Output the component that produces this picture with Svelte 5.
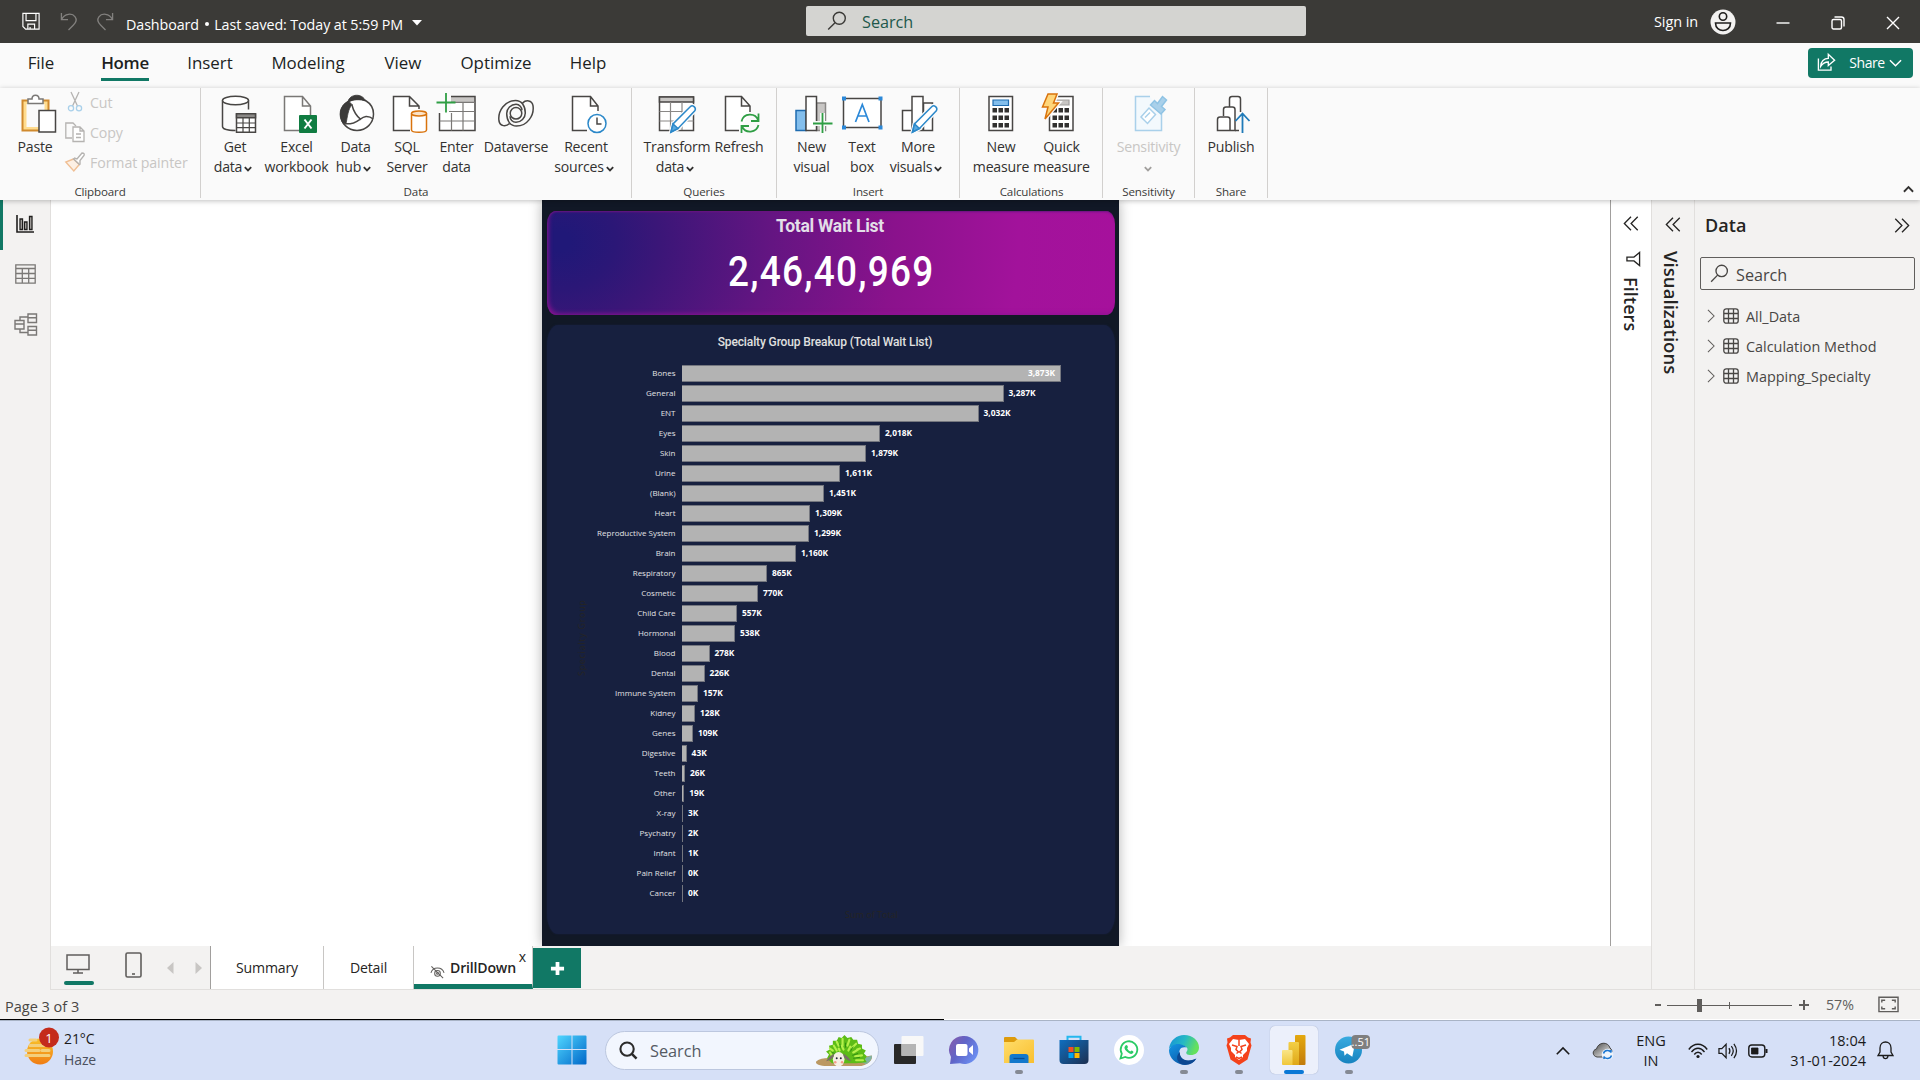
<script>
  const tabs = [
    { t: 'File', w: 84 }, { t: 'Home', w: 84 }, { t: 'Insert', w: 84 }, { t: 'Modeling', w: 112 },
    { t: 'View', w: 78 }, { t: 'Optimize', w: 108 }, { t: 'Help', w: 76 }
  ];
  const groups = [
    { name: 'Data', cls: 'g-data', items: [
      { i: 'get', a: 'Get', b: 'data', v: 1, w: 60 }, { i: 'excel', a: 'Excel', b: 'workbook', w: 63 },
      { i: 'hub', a: 'Data', b: 'hub', v: 1, w: 55 }, { i: 'sql', a: 'SQL', b: 'Server', w: 48 },
      { i: 'enter', a: 'Enter', b: 'data', w: 51 }, { i: 'verse', a: 'Dataverse', b: '', w: 68 },
      { i: 'recent', a: 'Recent', b: 'sources', v: 1, w: 72 } ] },
    { name: 'Queries', cls: 'g-queries', items: [
      { i: 'transform', a: 'Transform', b: 'data', v: 1, w: 74 }, { i: 'refresh', a: 'Refresh', b: '', w: 50 } ] },
    { name: 'Insert', cls: 'g-insert', items: [
      { i: 'visual', a: 'New', b: 'visual', w: 55 }, { i: 'text', a: 'Text', b: 'box', w: 46 },
      { i: 'more', a: 'More', b: 'visuals', v: 1, w: 66 } ] },
    { name: 'Calculations', cls: 'g-calc', items: [
      { i: 'measure', a: 'New', b: 'measure', w: 58 }, { i: 'quick', a: 'Quick', b: 'measure', w: 63 } ] },
    { name: 'Sensitivity', cls: 'g-sens', items: [{ i: 'sens', a: 'Sensitivity', b: '', v: 1, w: 91, off: true }] },
    { name: 'Share', cls: 'g-share', items: [{ i: 'publish', a: 'Publish', b: '', w: 72 }] }
  ];
  const rows = [
    ['Bones', 3873, 379], ['General', 3287, 321.5], ['ENT', 3032, 296.5], ['Eyes', 2018, 198], ['Skin', 1879, 184],
    ['Urine', 1611, 158], ['(Blank)', 1451, 142], ['Heart', 1309, 128], ['Reproductive System', 1299, 127],
    ['Brain', 1160, 114], ['Respiratory', 865, 85], ['Cosmetic', 770, 76], ['Child Care', 557, 55], ['Hormonal', 538, 53],
    ['Blood', 278, 27.5], ['Dental', 226, 22.5], ['Immune System', 157, 16], ['Kidney', 128, 13], ['Genes', 109, 11],
    ['Digestive', 43, 4.6], ['Teeth', 26, 3], ['Other', 19, 2.2], ['X-ray', 3, 1], ['Psychatry', 2, 1], ['Infant', 1, 1],
    ['Pain Relief', 0, 1], ['Cancer', 0, 1]
  ];
  const fmt = (n) => n.toLocaleString('en-US') + 'K';
  const tables = ['All_Data', 'Calculation Method', 'Mapping_Specialty'];
  const keys = [0, 1, 2];
</script>

{#snippet lens(cls)}
  <svg class={cls} viewBox="0 0 20 20" fill="none" stroke="currentColor" stroke-width="1.4"><circle cx="12.3" cy="7.3" r="6" /><path d="M8 11.7 1.2 18.6" /></svg>
{/snippet}

{#snippet chev()}
  <svg class="chev" viewBox="0 0 8 6" fill="none" stroke="currentColor" stroke-width="1.8"><path d="M.8 1.2 4 4.4 7.2 1.2" /></svg>
{/snippet}

{#snippet dbl(right)}
  <svg class="dbl" class:flip={right} viewBox="0 0 16 16" fill="none" stroke="#252423" stroke-width="1.4"><path d="M8 .8.9 8 8 15.2M15.2.8 8.1 8l7.1 7.2" /></svg>
{/snippet}

{#snippet icon(n)}
  <svg class="ico" viewBox="0 0 40 40" fill="none" stroke="#484644" stroke-width="1.5">
    {#if n === 'get'}
      <path d="M7.5 6.5v26c0 2.300 5 4 13 4M33.500 6.500v9" /><ellipse cx="20.500" cy="6.500" rx="13" ry="4.200" fill="#fff" />
      <path d="M21.500 20h19v18.300h-19z" fill="#fff" /><path d="M21.500 19.800h19v4h-19z" fill="#8a8886" /><path d="M21.500 29h19M21.500 33.700h19M28 24v14M34.300 24v14" stroke-width="1.200" />
    {:else if n === 'excel'}
      <path d="M22 36.500H7.500V2.500h18L33.500 12v9M25.500 2.500V12h8" stroke="#7a7876" fill="#fff" /><rect x="22" y="21" width="18" height="18" rx="1" fill="#107c41" stroke="none" />
      <path d="M27.500 25.500 34.500 34.500M34.500 25.500l-7 9" stroke="#fff" stroke-width="2" />
    {:else if n === 'hub'}
      <path d="M12.500 7.500C8 10 4.700 15 4.700 20c0 9 7 16.500 16.300 16.500S37.500 29 37.500 20c0-5.500-3-10.500-8-13.500-5-2-12-1.500-17 1z" fill="#fff" />
      <path d="M12 7.500C14 -.5 26.500-1 29.500 7c-5.500-2-12-1.500-17.500.5zM12.500 7 16 10.500C12 15 11.500 23 10 29.500L7.500 30C1.500 22 3.500 11.500 12.500 7z" fill="#3b3a39" stroke="#3b3a39" stroke-width=".8" />
      <path d="M15.800 10.500c1.500 6 4.500 11.500 9.200 15.200M7.500 29.500c4 .8 7 .3 10-.5 5.500-2 8-6 12.500-6.500 4-.2 6 1.500 7.200 2.500" />
    {:else if n === 'sql'}
      <path d="M23 36.500H6.500V2.500h16L32 12v3M22.500 2.500V12H32" fill="#fff" /><path d="M24.500 19.500V36c0 3 15 3 15 0V19.500" fill="#fff" stroke="#d9730d" /><ellipse cx="32" cy="19.500" rx="7.500" ry="2.500" fill="#fbe3c8" stroke="#d9730d" />
    {:else if n === 'enter'}
      <path d="M2.500 18v18.500H38V3H14v14.500z" fill="#fff" stroke="none" /><path d="M14 3h24v5H14z" fill="#c8c6c4" stroke="none" /><path d="M14 2.500h24v34H2.500V19" /><path d="M14 8.300h24M12 17.500h26M2.500 27H38M14.500 19v17.500M26 8.500v28" stroke-width="1.200" stroke="#7a7876" />
      <path d="M9 -1v19.500M-.5 8.500h19" stroke="#2f9e44" stroke-width="1.800" />
    {:else if n === 'verse'}
      <path d="M13.500 29.500C10 33 4 32.500 3 27 1.500 17 9 6.500 19.500 6.500c6 0 9.800 5 9.800 12.500 0 5-4.300 9.300-9.300 9.300-3.500 0-6-3-6-6" />
      <path d="M26.500 9.100C30 5.600 36 6.100 37 11.600 38.500 21.600 31 32.100 20.500 32.100c-6 0-9.800-5-9.800-12.500 0-5 4.300-9.300 9.300-9.300 3.500 0 6 3 6 6" /><circle cx="20" cy="19.300" r="5.800" />
    {:else if n === 'recent'}
      <path d="M21 36.500H6.500V2.500h18L32 12v5M24.500 2.500V12H32" fill="#fff" /><circle cx="31" cy="29.500" r="9" fill="#fff" stroke="#2b88c9" /><path d="M31 23.500v6.500h4.500" />
    {:else if n === 'transform'}
      <path d="M2.500 3h34v33.500h-34z" fill="#fff" /><path d="M2.500 3h34v5h-34z" fill="#c8c6c4" /><path d="M2.500 17.500h34M2.500 27h34M13.500 8v28M25 8v28" stroke-width="1.200" stroke="#8a8886" />
      <path d="m14 38 2-8L33.500 12.500c2-2 6 1 4.500 4L21 34.500z" fill="#fff" stroke="#fafafa" stroke-width="4" /><path d="m14 38 2-8L33.500 12.500c2-2 6 1 4.500 4L21 34.500z" fill="#fff" stroke="#2b88c9" /><path d="m14 38 2-8 5 4.500z" fill="#5aa9e0" stroke="#2b88c9" />
    {:else if n === 'refresh'}
      <path d="M20 36.500H6.500V2.500h16L31 12v6M22.500 2.500V12H31" fill="#fff" /><path d="M22.500 27.500c2-9 14-9 16.500-1.500M39.500 19.500v7.500H32M39.500 31c-2 8-13 9-16.500 1.500M22.500 39v-7H30" stroke="#2f9e44" stroke-width="1.800" />
    {:else if n === 'visual'}
      <path d="M24.500 9h9v27.500h-9z" fill="#c8c6c4" stroke="#8a8886" /><path d="M4 16.500h10v20H4z" fill="#83beec" stroke="#1f6cb0" /><path d="M14 2.500h10.500v34H14z" fill="#fff" />
      <path d="M30.500 19v20M21 29.500h19.500" stroke="#fafafa" stroke-width="5" /><path d="M30.500 19v20M21 29.500h19.500" stroke="#2f9e44" stroke-width="1.800" />
    {:else if n === 'text'}
      <path d="M1.500 4.500h37.500v29H1.500z" fill="#fff" /><path d="M13.500 28 20.300 10.500 27 28M16 22h8.700" stroke="#2b88d8" stroke-width="1.700" /><path d="M0 2.500h4v4H0zM36.500 2.500h4v4h-4zM0 31.500h4v4H0zM36.500 31.500h4v4h-4z" fill="#2b88d8" stroke="none" />
    {:else if n === 'more'}
      <path d="M25.500 9h9v27.500h-9zM4.500 16.500H14v20H4.500zM14 2.500h11v34H14z" fill="#fff" />
      <path d="m14.500 38 2-8L34 12.500c2-2 6 1 4.500 4L21.500 34.500z" fill="#fff" stroke="#fafafa" stroke-width="4" /><path d="m14.500 38 2-8L34 12.500c2-2 6 1 4.500 4L21.500 34.500z" fill="#fff" stroke="#2b88c9" /><path d="m14.500 38 2-8 5 4.500z" fill="#5aa9e0" stroke="#2b88c9" />
    {:else if n === 'measure'}
      <path d="M8 2.500h23.500v34H8z" fill="#fff" /><path d="M12 6h15.500v5.500H12z" fill="#83beec" stroke="#1f6cb0" stroke-width="1.200" />
      {#each keys as r}{#each keys as c}<rect x={11.500 + c * 6} y={14 + r * 7.500} width="4.500" height="4.500" fill="#323130" stroke="none" />{/each}{/each}
    {:else if n === 'quick'}
      <g transform="translate(-2 0)"><path d="M9.500 2.500h23.500v34H9.500z" fill="#fff" /><path d="M16 6h13v5H16z" fill="#c8c6c4" stroke="#a19f9d" stroke-width="1.200" />
      {#each keys as r}{#each keys as c}<rect x={12.500 + c * 6} y={14 + r * 7.500} width="4.500" height="4.500" fill="#323130" stroke="none" />{/each}{/each}
      <path d="M8 0h9l-3.500 9h5L5 25l3-12H2.500z" fill="#ffd67a" stroke="#fafafa" stroke-width="4" /><path d="M8 0h9l-3.500 9h5L5 25l3-12H2.500z" fill="#ffd67a" stroke="#d9730d" /></g>
    {:else if n === 'sens'}
      <path d="M21 2.500H6.500v34h26V20" stroke="#a9d0ea" fill="#f3f9fd" /><path d="m12 23 8-9 6.500 6.500-8 9zM16 23.500l5-5" stroke="#a9d0ea" fill="#fff" /><path d="m21.500 11 4-4.500 3 3 5-7 4 3.500-5 6.500 3.500 3-4 4.500z" fill="#a9d0ea" stroke="#8fc3e4" />
    {:else if n === 'publish'}
      <path d="M6.500 36.500v-11q0-2.500 2.500-2.500h7.500q2.500 0 2.500 2.500v11zM12.500 22v-6.500q0-2.500 2.500-2.500h6.500q2.500 0 2.500 2.500v21H19M18.500 13V5q0-2.500 2.500-2.500h6q2.500 0 2.500 2.500v13" fill="#fff" /><path d="M24 36.500h4" /><path d="M31.500 39V20M24.500 27l7-7.500 7 7.500" stroke="#1f7ab8" stroke-width="1.800" />
    {/if}
  </svg>
{/snippet}

<div class="app">
  <header class="title">
    <div class="quick">
      <svg class="q1" viewBox="0 0 20 20" fill="none" stroke="#fff" stroke-width="1.300"><path d="M1 1h18v17.500H4L1 15.500zM4.500 1v8h11V1M6.500 18.500v-5.500h7.500v5.500M9 16v2" /></svg>
      <svg class="q2" viewBox="0 0 18 20" fill="none" stroke="#82807e" stroke-width="1.400"><path d="M1.500 1v7h7M1.500 8C5 1 13 1 16 5s0 7-2 9l-5 5" /></svg>
      <svg class="q3" viewBox="0 0 18 20" fill="none" stroke="#82807e" stroke-width="1.400"><path d="M16.500 1v7h-7M16.500 8C13 1 5 1 2 5s0 7 2 9l5 5" /></svg>
      <span class="doc">Dashboard <i></i> Last saved: Today at 5:59 PM</span>
      <svg class="caret" viewBox="0 0 10 6"><path d="M0 0h10L5 5.500z" fill="#fff" /></svg>
    </div>
    <div class="find">{@render lens('lens1')}<span>Search</span></div>
    <div class="win">
      <span class="sign">Sign in</span>
      <svg class="user" viewBox="0 0 26 26"><circle cx="13" cy="13" r="12.500" fill="#f3f2f1" /><g fill="none" stroke="#201f1e" stroke-width="1.600"><circle cx="13" cy="7.500" r="3.700" /><path d="M5.500 14h15c0 10-15 10-15 0z" /></g></svg>
      <svg class="wc" viewBox="0 0 14 14" stroke="#fff" stroke-width="1.400"><path d="M.5 7h13" /></svg>
      <svg class="wc" viewBox="0 0 14 14" fill="none" stroke="#fff" stroke-width="1.400"><rect x="1" y="3.500" width="9.500" height="9.500" rx="1.500" /><path d="M3.500 1h7q2.500 0 2.500 2.500v7" /></svg>
      <svg class="wc" viewBox="0 0 14 14" stroke="#fff" stroke-width="1.400"><path d="M1 1l12 12M13 1 1 13" /></svg>
    </div>
  </header>

  <nav class="tabs">
    {#each tabs as t}<div class="tab" class:on={t.t === 'Home'} style:width="{t.w}px"><span>{t.t}</span></div>{/each}
    <button class="share">
      <svg viewBox="0 0 20 20" fill="none" stroke="#fff" stroke-width="1.500"><path d="M1 6v13h14v-4M3.500 15c0-6 4-9 8.500-9V1.500L19 8l-7 6v-4c-4 0-6 1-8.500 5z" /></svg>
      <span>Share</span>
      <svg class="sc" viewBox="0 0 14 8" fill="none" stroke="#fff" stroke-width="1.600"><path d="M1 1l6 6 6-6" /></svg>
    </button>
  </nav>

  <section class="ribbon">
    <div class="group g-clip">
      <div class="clip">
        <div class="paste">
          <svg class="ico" viewBox="0 0 40 40" fill="none" stroke-width="1.500"><path d="M5.500 6.500H31.500V36.500H5.500z" fill="#ffdc8f" stroke="#d08a2e" stroke-width="2" /><path d="M9.500 10h18v23h-18z" fill="#fafafa" stroke="none" /><path d="M11 9.500V5h4c0-5 7-5 7 0h4v4.500z" fill="#fff" stroke="#7a7876" /><path d="M22 16.500h16.500V38H22z" fill="#fff" stroke="#484644" /></svg>
          <span>Paste</span>
        </div>
        <div class="edits">
          <div class="edit"><svg viewBox="0 0 20 20" fill="none" stroke="#b5b3b1" stroke-width="1.300"><path d="M6 0l6.500 14M14 0 7.500 14" /><circle cx="6" cy="16.300" r="2.600" stroke="#a9d0ea" /><circle cx="14" cy="16.300" r="2.600" stroke="#a9d0ea" /></svg>Cut</div>
          <div class="edit"><svg viewBox="0 0 20 20" fill="none" stroke="#b5b3b1" stroke-width="1.300"><path d="M7 16H.8V1H8l3 3" /><path d="M8 5h7l4 4v10.500H8zM15 5v4h4M11 12h5M11 15.500h5" fill="#fff" /></svg>Copy</div>
          <div class="edit"><svg viewBox="0 0 20 20" fill="none" stroke="#b5b3b1" stroke-width="1.400"><path d="m9 6 3 1 5-6q3 0 2 2.500l-4 5v4" fill="#fff" /><path d="M8.500 7 .8 10l8 9 5.500-6.500z" fill="#fdf0e4" stroke="#f0bf94" /><path d="m8 6.500 7 6.500" /></svg>Format painter</div>
        </div>
      </div>
      <div class="gname">Clipboard</div>
    </div>
    {#each groups as g}
      <div class="group {g.cls}">
        <div class="items">
          {#each g.items as it}
            <div class="item" class:off={it.off} style:width="{it.w}px">
              {@render icon(it.i)}
              <span>{it.a}</span>
              <span class="l2" class:has={it.v}>{it.b}{#if it.v}{@render chev()}{/if}</span>
            </div>
          {/each}
        </div>
        <div class="gname">{g.name}</div>
      </div>
    {/each}
    <svg class="fold" viewBox="0 0 12 8" fill="none" stroke="#323130" stroke-width="2"><path d="M1 7l5-5 5 5" /></svg>
  </section>

  <main>
    <aside class="rail">
      <div class="active"></div>
      <svg class="r1" viewBox="0 0 18 18" fill="none" stroke="#201f1e" stroke-width="1.300"><path d="M1 0v17h17" stroke-width="1.600" /><path d="M4 4h2.500v10.500H4zM8.500 7H11v7.500H8.500zM13.500 1.500H16v13h-2.500z" fill="#b3b0ad" /></svg>
      <svg class="r2" viewBox="0 0 21 20" fill="none" stroke="#7a7876" stroke-width="1.300"><path d="M.8.800h19.400v18.400H.8zM.8 4.500h19.400M.8 9.500h19.400M.8 14.400h19.400M7.300 4.500v15M13.700 4.500v15" /></svg>
      <svg class="r3" viewBox="0 0 23 23" fill="none" stroke="#7a7876" stroke-width="1.400"><path d="M1 7.500h9v8.500H1zM1 11h9M14 1h8.500v8.500H14zM14 4.800h8.500M14 13.500h8.500V22H14zM14 17.300h8.500M6 7.500V4h8M6 16v3.500h8" /></svg>
    </aside>

    <div class="center">
      <div class="canvas">
        <div class="board">
          <div class="page">
            <div class="card"><h2>Total Wait List</h2><strong>2,46,40,969</strong></div>
            <div class="chart">
              <h3>Specialty Group Breakup (Total Wait List)</h3>
              <div class="plot">
                <span class="ylab">Specialty Group</span>
                {#each rows as r, n}
                  <div class="row"><span class="cat">{r[0]}</span><div class="bar" class:thin={r[2] < 2} style:width="{r[2]}px">{#if n === 0}<b>{fmt(r[1])}</b>{/if}</div>{#if n > 0}<b>{fmt(r[1])}</b>{/if}</div>
                {/each}
              </div>
              <span class="xlab">Sum of Total</span>
            </div>
          </div>
        </div>
        <aside class="filters">
          {@render dbl(false)}
          <svg class="funnel" viewBox="0 0 16 16" fill="none" stroke="#252423" stroke-width="1.400"><path d="M14.500 1v14L8.500 10H1V6h7.500z" /></svg>
          <span class="vert">Filters</span>
        </aside>
      </div>
      <footer class="pages">
        <div class="views">
          <svg class="mon" viewBox="0 0 24 20" fill="none" stroke="#605e5c" stroke-width="1.500"><path d="M1 1h22v14.500H1zM12 15.500v3.500M7 19h10" /></svg>
          <svg class="tel" viewBox="0 0 17 26" fill="none" stroke="#605e5c" stroke-width="1.600"><rect x="1" y="1" width="15" height="24" rx="1.500" /><path d="M7 22h3" /></svg>
          <svg class="arr a1" viewBox="0 0 7 14"><path d="M6.500 1v12L0 7z" fill="#c8c6c4" /></svg>
          <svg class="arr" viewBox="0 0 7 14"><path d="M.5 1v12L7 7z" fill="#c8c6c4" /></svg>
        </div>
        <div class="pt p1">Summary</div>
        <div class="pt p2">Detail</div>
        <div class="pt p3"><svg viewBox="0 0 16 14" fill="none" stroke="#605e5c" stroke-width="1.100"><path d="M1 8C3 1 13 1 15 8M1.500 1l12.500 12.500" /><circle cx="8" cy="8.500" r="3" /><circle cx="8" cy="8.500" r="1" /></svg>DrillDown<span class="close">x</span></div>
        <button class="add"><svg viewBox="0 0 16 16" stroke="#fff" stroke-width="4"><path d="M8 1v14M1 8h14" /></svg></button>
      </footer>
    </div>

    <aside class="visual">{@render dbl(false)}<span class="vert">Visualizations</span></aside>
    <aside class="data">
      <div class="dh"><span>Data</span>{@render dbl(true)}</div>
      <div class="ds">{@render lens('lens2')}<span>Search</span></div>
      {#each tables as t}
        <div class="dr">
          <svg class="dc" viewBox="0 0 9 16" fill="none" stroke="#605e5c" stroke-width="1.200"><path d="M1 1l7 7-7 7" /></svg>
          <svg class="dt" viewBox="0 0 16 16" fill="none" stroke="#484644" stroke-width="1.300"><rect x=".8" y=".8" width="14.400" height="14.400" rx="2.500" /><path d="M5.500 1v14M10.500 1v14M1 5.500h14M1 10.500h14" /></svg>
          <span>{t}</span>
        </div>
      {/each}
    </aside>
  </main>

  <div class="status">
    <span class="pg">Page 3 of 3</span>
    <div class="zoom">
      <svg class="slider" viewBox="0 0 154 16" stroke="#605e5c"><path d="M0 8h6" stroke-width="2" /><path d="M12 8.500h125" stroke-width="1" /><path d="M74.500 5v7" /><path d="M44.500 2v13" stroke-width="5" /><path d="M144 8h10M149 3v10" stroke-width="2" /></svg>
      <span>57%</span>
      <svg class="fit" viewBox="0 0 22 17" fill="none" stroke="#605e5c" stroke-width="1.500"><path d="M1 1h20v15H1z" /><path d="M4 6.500V4h3.500M14.500 4H18v2.500M18 10.500V13h-3.500M7.500 13H4v-2.500" /></svg>
    </div>
  </div>
  <div class="edge"></div>

  <div class="task">
    <div class="weather">
      <svg viewBox="0 0 32 38"><defs><linearGradient id="sun" x2="0" y2="1"><stop offset="0" stop-color="#f9c22b" /><stop offset="1" stop-color="#f07c13" /></linearGradient></defs><circle cx="15" cy="24.500" r="13" fill="url(#sun)" /><path d="M5 13h6M5 18.500h17M1 23.500h13M17 23.500h7M1 28.500h23" stroke="#f3cf7c" stroke-width="3" stroke-linecap="round" /><circle cx="24" cy="10.500" r="10" fill="#c42b1c" /><text x="24" y="15.500" text-anchor="middle" font-size="13" fill="#fff">1</text></svg>
      <div class="wt"><span>21°C</span><span class="hz">Haze</span></div>
    </div>
    <div class="apps">
      <div class="app-i"><svg viewBox="0 0 30 30"><defs><linearGradient id="win" x2="1" y2="1"><stop offset="0" stop-color="#50d6ff" /><stop offset="1" stop-color="#0067c8" /></linearGradient></defs><path d="M1.500.5h13v13.500h-14V1.500q0-1 1-1zM15.500.5h13q1 0 1 1V14h-14zM.5 15h14v14.500h-13q-1 0-1-1zM15.500 15h14v13.500q0 1-1 1h-13z" fill="url(#win)" /></svg></div>
      <div class="pill">
        <svg class="pl" viewBox="0 0 20 20" fill="none" stroke="#2b2b2b" stroke-width="2.200"><circle cx="8.500" cy="8.500" r="7" /><path d="M13.500 13.500l5 5" stroke-width="2.600" /></svg>
        <span>Search</span>
        <svg class="hog" viewBox="0 0 60 34">
          <path d="M1 27c6-5 18-3 29-2 9 1 18-3 28-4 2 4-4 11-14 11H12C5 32-1 30 1 27z" fill="#bb9863" /><path d="M40 25c6 1 12-2 18-4 1 3-2 7-6 9z" fill="#7fb3a4" />
          <path d="M12 24l2-4-3-3 4-2-1-4 4-1 0-4 4 0 2-4 3 1 3-3 3 3 4-1 2 3 4 0 1 4 4 1 0 4 4 2-2 3 3 3-2 3 2 3-11 1H17z" fill="#5cbc17" />
          <path d="M17 21l-2-3M18 16l-3-2M22 16l-3-5M24 11l-2-4M28 11V4M29 15l-2-4M33 11l2-6M34 16l2-4M38 13l4-4M39 18l5-3M43 15l3-1M41 22l7-1M42 26l7 0M25 16l-1-2" stroke="#b4f04a" stroke-width="2.200" stroke-linecap="round" /><path d="M20 19l-3-1M26 13l-1-4M31 13l0-5M36 17l3-5M38 21l6-2M39 24l7-1" stroke="#2f8f12" stroke-width="1" />
          <ellipse cx="24" cy="25" rx="6" ry="7.500" fill="#f4efe4" /><path d="M19 19q-5 3-8 8 6-1 8-5zM29 19q5 3 8 8-6-1-8-5z" fill="#777064" /><circle cx="22" cy="24" r="1" fill="#23233a" /><circle cx="26.200" cy="24" r="1" fill="#23233a" /><circle cx="20.500" cy="28" r="1.300" fill="#f59c8d" /><circle cx="27.500" cy="28" r="1.300" fill="#f59c8d" />
        </svg>
      </div>
      <div class="app-i"><svg viewBox="0 0 30 30"><rect x="0" y="9" width="22" height="20" rx="1" fill="#292929" /><rect x="7.500" y="1" width="22" height="20" rx="1" fill="#f8f8f8" /><path d="M7.500 9H22v12H7.500z" fill="#b5b5b5" /></svg></div>
      <div class="app-i"><svg viewBox="0 0 30 30"><defs><linearGradient id="chat" x2="1" y2=".6"><stop offset="0" stop-color="#8a5aa8" /><stop offset=".5" stop-color="#6065c8" /><stop offset="1" stop-color="#6b8df0" /></linearGradient></defs><path d="M15 1a14 14 0 1 1-4 27.300L1 29l1-7A14 14 0 0 1 15 1z" fill="url(#chat)" /><rect x="7" y="9" width="11.500" height="12" rx="2" fill="#fff" /><path d="M20 13.500l4-3.500v10l-4-3.500z" fill="#fff" /></svg></div>
      <div class="app-i run"><svg viewBox="0 0 30 30"><defs><linearGradient id="fold" x2="1" y2="1"><stop offset="0" stop-color="#ffdd6b" /><stop offset="1" stop-color="#f9bf2f" /></linearGradient></defs><path d="M0 3q0-1 1-1h10l3 3-2 4H0z" fill="#dd9b0c" /><path d="M0 7h10l3-2.500h16q1 0 1 1V28H0z" fill="url(#fold)" /><path d="M5.500 28v-6q0-3 3-3h13q3 0 3 3v6z" fill="#1378cc" /><path d="M9.500 23.500h11" stroke="#0a4d91" stroke-width="1.300" /></svg></div>
      <div class="app-i"><svg viewBox="0 0 30 30"><defs><linearGradient id="store" x2="1" y2="1"><stop offset="0" stop-color="#0f6fc0" /><stop offset="1" stop-color="#1d2f50" /></linearGradient></defs><path d="M8.500 8V1.800h13V8" fill="none" stroke="#25b7ee" stroke-width="2" /><path d="M.5 5h29v20q0 4-4 4h-21q-4 0-4-4z" fill="url(#store)" /><path d="M9.500 12h5v5h-5z" fill="#f25022" /><path d="M15.500 12h5v5h-5z" fill="#7fba00" /><path d="M9.500 18h5v5h-5z" fill="#00a4ef" /><path d="M15.500 18h5v5h-5z" fill="#ffb900" /></svg></div>
      <div class="app-i"><svg viewBox="0 0 30 30"><circle cx="15" cy="15" r="15" fill="#fff" /><path d="M6.500 23.500l1.300-4.800A8.300 8.300 0 1 1 11.300 22z" fill="none" stroke="#2bcb66" stroke-width="1.800" /><path d="M11.500 10.500q1.500-1.500 2.500 1.500l-.8 1.500q1 2 3 3l1.300-1q3 1 1.500 2.500-2 2-5-.5-4-3-3.500-5.500z" fill="#2bcb66" /></svg></div>
      <div class="app-i run"><svg viewBox="0 0 30 30"><defs><linearGradient id="ed" x2="1" y2=".3"><stop offset="0" stop-color="#168fd8" /><stop offset=".55" stop-color="#26b9c4" /><stop offset="1" stop-color="#65e15c" /></linearGradient><linearGradient id="ed2" x2=".8" y2="1"><stop offset="0" stop-color="#1496e4" /><stop offset="1" stop-color="#0a4f9f" /></linearGradient></defs><path d="M0 14C1 5 8 0 15 0c9 0 15 6 15 12.500 0 5-4 7.500-8 7.500-4 0-6-1.500-4-4 1.500-2 0-5-5-5.500C7 9.500 2 11 0 14z" fill="url(#ed)" /><path d="M0 15C2 10 7 8 12 9.500c4 1 5 2 5.500 3C12 11 9 15 11 20c2 6 9 7.500 16 4-4 6-11 7-16 5C4 27 0 21 0 15z" fill="url(#ed2)" /><path d="M11 17c-1 7 6 11 16.500 6.500C24 29 18 31 12 29 7 26 7 20 11 17z" fill="#0d4892" /></svg></div>
      <div class="app-i run"><svg viewBox="0 0 30 30"><path d="M9 0h12l3 2.500 3 1-.5 4 1 3-4 14L15 30 6.500 24.500l-4-14 1-3-.5-4 3-1z" fill="#f4421b" /><path d="M15 5l6-1 4 5-2 4 0 3-4 4 0 2-4 3-4-3 0-2-4-4V13L5 9l4-5z" fill="#fff" /><path d="M8 10l5 1.500-1 3 2.500 2.500-2 1.500M22 10l-5 1.500 1 3-2.500 2.500 2 1.500M12 22l3 1.500 3-1.500M15 5v6" stroke="#f4421b" stroke-width="1.500" fill="none" /></svg></div>
      <div class="app-i run sel"><svg viewBox="0 0 30 30"><defs><linearGradient id="b1" x2="0" y2="1"><stop offset="0" stop-color="#e4a90e" /><stop offset="1" stop-color="#c27b0b" /></linearGradient><linearGradient id="b2" x2="0" y2="1"><stop offset="0" stop-color="#f3cf46" /><stop offset="1" stop-color="#dfa717" /></linearGradient><linearGradient id="b3" x2="0" y2="1"><stop offset="0" stop-color="#f9e589" /><stop offset="1" stop-color="#f0c73a" /></linearGradient></defs><rect x="16" width="10.500" height="30" rx="1" fill="url(#b1)" /><path d="M9.500 8q0-1 1-1h8.500q1 0 1 1v22H9.500z" fill="url(#b2)" /><path d="M3 16q0-1 1-1h8.500q1 0 1 1v14H4q-1 0-1-1z" fill="url(#b3)" /></svg></div>
      <div class="app-i run"><svg viewBox="0 0 30 30"><defs><linearGradient id="tg" x2="0" y2="1"><stop offset="0" stop-color="#39abe0" /><stop offset="1" stop-color="#1783bf" /></linearGradient></defs><circle cx="14.500" cy="15" r="13.500" fill="url(#tg)" /><path d="M5.500 14.800 21 8.500l-2.700 13.300-5.300-3.500-2.500 2.500-.5-4.300z" fill="#fff" /><rect x="17.500" width="18.500" height="14" rx="4" fill="#7f7f7f" /><text x="26.800" y="11" text-anchor="middle" font-size="11" fill="#fff">..51</text></svg></div>
    </div>
    <div class="tray">
      <svg class="t1" viewBox="0 0 14 8" fill="none" stroke="#1b1b1b" stroke-width="1.600"><path d="M.8 7.200 7 1l6.200 6.200" /></svg>
      <svg class="t2" viewBox="0 0 20 18"><defs><linearGradient id="cl" x2="1" y2="1"><stop offset="0" stop-color="#444" /><stop offset=".6" stop-color="#b9b9b9" /></linearGradient></defs><path d="M4 15c-5-1-5-7-.5-8C5 0 15-1 17 6c3 2 3 9-1 9z" fill="url(#cl)" stroke="#444" /><circle cx="14.500" cy="12.500" r="5.800" fill="#eef4fc" /><path d="M10.500 11.500c1-3.500 6-4 7.500-1V8M18.500 13.500c-1 3.500-6 4-7.500 1V17" fill="none" stroke="#1976d2" stroke-width="1.500" /></svg>
      <div class="lang"><span>ENG</span><span>IN</span></div>
      <svg class="t3" viewBox="0 0 20 16" fill="none" stroke="#1b1b1b" stroke-width="1.400"><path d="M.8 6.500c5-7 13.400-7 18.400 0M3.500 9c4-5 9-5 13 0M6.300 11.500c2-3 5.400-3 7.400 0" /><circle cx="10" cy="13.500" r="1.600" fill="#1b1b1b" stroke="none" /></svg>
      <svg class="t4" viewBox="0 0 21 18" fill="none" stroke="#1b1b1b" stroke-width="1.300"><path d="M1 6.500h3L8.500 2v14L4 11.500H1zM11.500 6q2 3 0 6M14 4q4 5 0 10M16.700 1.500q5.500 7.500 0 15" /></svg>
      <svg class="t5" viewBox="0 0 20 14" fill="none" stroke="#1b1b1b" stroke-width="1.400"><rect x=".8" y="1" width="16" height="12" rx="3" /><path d="M3.500 4h6.500v6H3.500z" fill="#1b1b1b" stroke-width=".8" /><path d="M18.500 5v4" stroke-width="2" /></svg>
      <div class="clock"><span>18:04</span><span>31-01-2024</span></div>
      <svg class="t6" viewBox="0 0 17 19" fill="none" stroke="#1b1b1b" stroke-width="1.300"><path d="M1 14.500l2-3.500V7c0-8 11-8 11 0v4l2 3.500zM6 15c.5 3.500 4.500 3.500 5 0" /></svg>
    </div>
  </div>
</div>

<style>
  :global(body) { margin: 0; overflow: hidden; }
  .app, .app * { box-sizing: border-box; }
  .app { width: 1920px; height: 1080px; display: flex; flex-direction: column; overflow: hidden; font-family: "Open Sans", "Noto Sans", sans-serif; font-size: 14px; color: #252423; background: #f3f2f1; }
  svg { flex: none; display: block; overflow: visible; }
  span { white-space: nowrap; }
  button { border: 0; padding: 0; font: inherit; }

  .title { height: 43px; flex: none; background: #3b3a37; color: #fff; display: flex; align-items: center; }
  .quick { width: 806px; display: flex; align-items: center; padding-left: 22px; }
  .q1 { width: 18px; height: 19px; margin-right: 20px; }
  .q2 { width: 17px; height: 19px; margin-right: 20px; }
  .q3 { width: 17px; height: 19px; margin-right: 12px; }
  .doc { font-size: 14.300px; padding-top: 5px; letter-spacing: -.09px; width: 286px; }
  .doc i { display: inline-block; width: 4px; height: 4px; border-radius: 2px; background: #fff; margin: 0 2px 4px; }
  .caret { width: 10px; height: 6px; margin-top: 2px; }
  .find { width: 500px; height: 30px; margin-top: -1px; background: #d4d4d1; border-radius: 2px; display: flex; align-items: center; color: #3b3a37; font-size: 16.200px; }
  .find span { color: #21584b; padding-top: 1px; }
  .lens1 { width: 20px; height: 20px; margin: 0 15px 0 21px; }
  .win { margin-left: auto; display: flex; align-items: center; padding-right: 20px; }
  .sign { font-size: 14.500px; margin-right: 12px; letter-spacing: -.1px; }
  .user { width: 26px; height: 26px; margin-right: 40px; }
  .wc { width: 14px; height: 14px; margin: 3px 0 0 41px; }
  .user + .wc { margin-left: 0; }

  .tabs { height: 45px; flex: none; background: #fafafa; display: flex; }
  .tab { height: 39px; display: flex; justify-content: center; font-size: 16.900px; line-height: 39px; color: #201f1e; }
  .tab:first-child { padding-right: 2px; }
  .tab.on { font-weight: 600; padding-right: 2px; }
  .tab.on span { height: 38px; border-bottom: 3px solid #117865; letter-spacing: -.3px; }
  .share { margin: 5px 7px 0 auto; width: 105px; height: 30px; border-radius: 4px; background: #117865; color: #fff; display: flex; align-items: center; padding-left: 9px; font-size: 14px; }
  .share svg { width: 19px; height: 18px; margin-right: 9px; margin-top: -2px; }
  .share span { width: 44px; letter-spacing: -.4px; margin-top: -1px; }
  .share .sc { width: 13px; height: 8px; margin: 0; }

  .ribbon { height: 112px; flex: none; background: #fafafa; display: flex; position: relative; z-index: 2; box-shadow: 0 1px 5px rgba(0,0,0,.25); }
  .group { height: 110px; border-right: 1px solid #d2d0ce; display: flex; flex-direction: column; justify-content: space-between; }
  .gname { text-align: center; font-size: 11.600px; line-height: 13px; color: #3b3a39; letter-spacing: -.15px; }
  .g-clip { width: 201px; }
  .g-data { width: 431px; padding-left: 4px; }
  .g-data .gname { padding-right: 4px; }
  .g-queries { width: 145px; padding-left: 8px; }
  .g-queries .gname { padding-right: 8px; }
  .g-insert { width: 183px; padding-left: 7px; }
  .g-insert .gname { padding-right: 7px; }
  .g-calc { width: 143px; padding-left: 12px; }
  .g-calc .gname { padding-right: 11px; }
  .g-sens { width: 92px; }
  .g-share { width: 73px; }
  .items, .clip { display: flex; padding-top: 6px; }
  .item, .paste { display: flex; flex-direction: column; align-items: center; font-size: 14.100px; line-height: 20px; color: #323130; letter-spacing: -.2px; }
  .ico { width: 40px; height: 40px; margin-bottom: 3px; }
  .l2 { display: flex; align-items: center; min-height: 20px; }
  .l2.has { margin-left: -4px; }
  .off .l2.has { margin-left: -2px; }
  .chev { width: 8px; height: 6px; margin: 4px 0 0 2px; }
  .off { color: #c8c6c4; }
  .off .chev { margin-left: 0; color: #a19f9d; }
  .paste { width: 50px; margin-left: 10px; }
  .paste .ico { width: 40px; margin-left: 3px; }
  .edits { margin: -7px 0 0 5px; }
  .edit { height: 30px; display: flex; align-items: center; gap: 5px; color: #c8c6c4; font-size: 14.200px; letter-spacing: -.1px; }
  .edit svg { width: 20px; height: 20px; }
  .g-clip .clip { height: 90px; }
  .fold { width: 11px; height: 8px; margin: 97px 6px 0 auto; }

  main { height: 790px; flex: none; display: flex; }
  .rail { width: 51px; border-right: 1px solid #e1dfdd; display: flex; flex-direction: column; position: relative; }
  .active { position: absolute; left: 0; top: 0; width: 3px; height: 50px; background: #117865; }
  .r1 { width: 18px; height: 18px; margin: 15px 0 0 16px; }
  .r2 { width: 21px; height: 20px; margin: 31px 0 0 15px; }
  .r3 { width: 23px; height: 23px; margin: 29px 0 0 14px; }
  .center { width: 1600px; display: flex; flex-direction: column; }
  .canvas { height: 746px; display: flex; background: #fff; }
  .board { width: 1560px; padding-left: 491px; border-right: 1px solid #a19f9d; overflow: hidden; }
  .page { width: 577px; height: 746px; background: #111826; box-shadow: 0 0 12px rgba(0,0,0,.3); padding: 11px 4px 0 5px; }
  .card { height: 104px; border-radius: 9px / 13px; background: radial-gradient(ellipse 560px 480px at 12px 30px, #201878 2%, #2b1777 10%, #3b1678 18%, #641582 38%, #8a128c 60%, #a2129b 82%, #a6119c 100%); box-shadow: inset 3px -3px 5px -2px #8f1292, inset 0 2px 2px -1px #6b1582; display: flex; flex-direction: column; align-items: center; font-family: Roboto, sans-serif; }
  h2 { margin: 5px 0 0; font-size: 17.600px; line-height: 20px; font-weight: 700; color: #e3dfe8; letter-spacing: -.3px; padding-right: 2px; }
  .card strong { font-size: 42px; line-height: 50px; font-weight: 500; color: #fff; letter-spacing: 1.400px; margin-top: 11px; transform: scaleX(.88); }
  .chart { height: 609px; margin-top: 10px; background: #17203f; border-radius: 11px / 20px; display: flex; flex-direction: column; box-shadow: 0 0 2px #17203f; }
  h3 { margin: 9px 0 0 -12px; font: 500 12px/16px Roboto, sans-serif; color: #e0e0e0; text-align: center; letter-spacing: -.12px; }
  .plot { margin-top: 13px; position: relative; }
  .row { height: 20px; display: flex; align-items: center; font-size: 8px; }
  .cat { width: 128.500px; margin-right: 6.500px; text-align: right; color: #e2e2e4; padding-bottom: 2px; }
  .bar { height: 17px; background: #b3b3b3; border: solid #75777f; border-width: 1px 1px 1px 0; display: flex; align-items: center; justify-content: flex-end; margin-right: 5px; }
  .bar b { padding: 0 5px 1px 0; }
  .bar.thin { background: #75777f; border: 0; }
  b { color: #fff; font-weight: 700; font-size: 8.400px; padding-bottom: 2px; }
  .ylab { position: absolute; left: 29px; top: 233px; writing-mode: vertical-rl; transform: rotate(180deg); font-size: 9px; line-height: 12px; height: 84px; text-align: center; color: #252423; letter-spacing: .7px; }
  .xlab { text-align: center; font-size: 9px; color: #252423; margin: 5px 0 0 81px; }
  .filters { width: 40px; padding: 16px 0 0 12px; }
  .dbl { width: 16px; height: 15px; }
  .flip { transform: scaleX(-1); }
  .funnel { width: 15px; height: 16px; margin: 20px 0 10px 3px; }
  .vert { writing-mode: vertical-rl; font-size: 18px; font-weight: 600; line-height: 18px; display: block; letter-spacing: .1px; margin-left: -1px; }
  .pages { height: 44px; display: flex; background: #f3f2f1; border-bottom: 1px solid #e1dfdd; }
  .views { width: 160px; border-right: 1px solid #a19f9d; display: flex; align-items: flex-start; padding-left: 15px; position: relative; }
  .mon { width: 24px; height: 20px; margin-top: 8px; }
  .views::after { content: ''; position: absolute; left: 13px; top: 35px; width: 30px; height: 4px; border-radius: 2px; background: #117865; }
  .tel { width: 17px; height: 26px; margin: 6px 0 0 35px; }
  .arr { width: 7px; height: 14px; margin: 15px 0 0 21px; }
  .a1 { margin-left: 25px; }
  .pt { background: #fff; border-right: 1px solid #c8c6c4; display: flex; align-items: center; justify-content: center; font-size: 14.100px; letter-spacing: -.15px; }
  .p1 { width: 113px; }
  .p2 { width: 90px; }
  .p3 { width: 119px; border-bottom: 5px solid #117865; font-weight: 600; position: relative; padding: 4px 0 0 0; letter-spacing: -.2px; }
  .p3 svg { width: 15px; height: 14px; margin: 10px 5px 0 0; }
  .close { position: absolute; right: 6px; top: 2px; line-height: 18px; font-size: 14px; font-weight: 400; }
  .add { width: 48px; height: 40px; margin-top: 2px; background: #117865; display: flex; align-items: center; justify-content: center; }
  .add svg { width: 15px; height: 15px; }

  .visual { width: 44px; border: solid #e1dfdd; border-width: 0 1px 1px 1px; padding: 17px 0 0 13px; }
  .visual .vert { margin: 19px 0 0 -3px; font-size: 18.500px; letter-spacing: .05px; }
  .data { width: 225px; border-bottom: 1px solid #e1dfdd; padding: 12px 5px 0; }
  .dh { height: 26px; display: flex; align-items: center; justify-content: space-between; padding: 0 5px 0 5px; font-size: 18px; font-weight: 600; letter-spacing: .1px; }
  .ds { width: 215px; height: 33px; margin: 19px 0 11px; border: 1px solid #605e5c; border-radius: 2px; display: flex; align-items: center; font-size: 16.200px; color: #484644; }
  .ds span { padding-top: 2px; }
  .lens2 { width: 19px; height: 19px; margin: 0 7px 0 9px; }
  .dr { height: 30px; display: flex; align-items: center; font-size: 14.400px; color: #484644; padding-left: 7px; }
  .dc { width: 8px; height: 14px; margin-right: 8px; }
  .dt { width: 16px; height: 16px; margin-right: 7px; }

  .status { height: 29px; flex: none; display: flex; align-items: center; justify-content: space-between; padding: 2px 21px 0 5px; color: #484644; }
  .pg { font-size: 14.500px; padding-top: 1px; }
  .zoom { display: flex; align-items: center; font-size: 14.200px; margin-top: -2px; }
  .slider { width: 154px; height: 16px; margin-right: 17px; }
  .zoom span { width: 52px; color: #605e5c; }
  .fit { width: 21px; height: 17px; }
  .edge { height: 2px; flex: none; background: linear-gradient(#000, #000) 0 0 / 944px 1px no-repeat, linear-gradient(#fff 50%, #a9b4c6 50%); }

  .task { height: 59px; flex: none; background: #d6e0f7; display: flex; color: #1b1b1b; }
  .weather { width: 548px; flex: none; display: flex; padding: 6px 0 0 25px; }
  .weather svg { width: 32px; height: 38px; }
  .wt { display: flex; flex-direction: column; margin: 2px 0 0 7px; line-height: 20.500px; font-size: 14px; letter-spacing: -.1px; }
  .hz { color: #4c5160; }
  .apps { display: flex; align-items: center; padding-bottom: 1px; }
  .app-i { width: 48px; height: 48px; margin-right: 7px; flex: none; display: flex; align-items: center; justify-content: center; position: relative; border-radius: 5px; }
  .app-i svg { width: 30px; height: 30px; }
  .run::after { content: ''; position: absolute; left: 20px; bottom: 0; width: 8px; height: 4px; border-radius: 2px; background: #858a94; }
  .sel { background: #ecf0fb; box-shadow: 0 0 1px #8d99b5; }
  .sel::after { left: 14px; width: 20px; background: #0a78d6; }
  .pill { width: 274px; height: 39px; margin: 0 6px 0 2px; flex: none; border-radius: 20px; background: #f2f6fe; border: 1px solid #bcc7df; display: flex; align-items: center; font-size: 16.300px; color: #555a64; }
  .pill span { padding-top: 1px; }
  .pl { width: 19px; height: 19px; margin: 0 12px 0 13px; }
  .hog { width: 59px; height: 33px; margin: 2px 4px 0 auto; }
  .tray { margin-left: auto; display: flex; align-items: center; padding-right: 26px; line-height: 20px; font-size: 14.500px; }
  .t1 { width: 14px; height: 8px; margin-right: 23px; }
  .t2 { width: 20px; height: 18px; margin-right: 22px; }
  .lang { width: 32px; display: flex; flex-direction: column; align-items: center; margin-right: 21px; }
  .t3 { width: 20px; height: 16px; margin-right: 10px; }
  .t4 { width: 20px; height: 18px; margin-right: 10px; }
  .t5 { width: 20px; height: 14px; margin-right: 20px; }
  .clock { width: 78px; display: flex; flex-direction: column; align-items: flex-end; margin-right: 11px; }
  .t6 { width: 17px; height: 19px; }
</style>
